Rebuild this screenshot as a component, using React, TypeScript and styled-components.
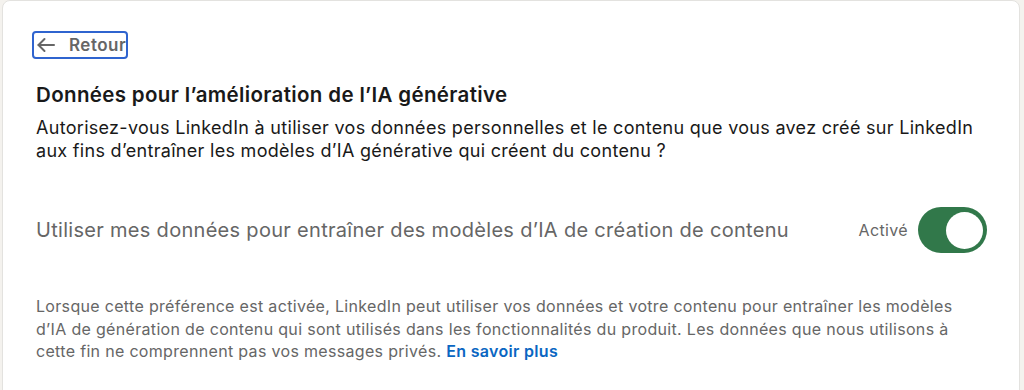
import styled, { createGlobalStyle } from 'styled-components';

const GlobalStyle = createGlobalStyle`
	body {
		margin: 0;
		background-color: #f4f2ee;
		font-family: Inter, "Liberation Sans", sans-serif;
	}
`;

const Page = styled.div`
	padding: 0 4px 0 2px;
	height: 390px;
	overflow: hidden;
`;

const Card = styled.section`
	background: #fff;
	border: 1px solid #e3e2df;
	border-radius: 8px;
	min-height: 420px;
	padding: 30px 32px 0 33px;
`;

const BackButton = styled.button`
	display: flex;
	align-items: center;
	gap: 13px;
	height: 28px;
	margin-left: -4px;
	padding: 0 0 0 2px;
	background: none;
	border: 2px solid #2f64cf;
	border-radius: 4px;
	color: #666;
	font-family: inherit;
	font-size: 17px;
	font-weight: 600;
	letter-spacing: 0.5px;
	cursor: pointer;
`;

const Title = styled.h2`
	margin: 24px 0 0;
	font-size: 20.5px;
	font-weight: 600;
	letter-spacing: 0.35px;
	color: #191919;
	line-height: 24px;
`;

const Description = styled.p`
	margin: 9px 0 0;
	font-size: 18px;
	letter-spacing: 0.3px;
	line-height: 23px;
	color: #191919;
`;

const SettingRow = styled.div`
	display: flex;
	align-items: center;
	justify-content: space-between;
	margin-top: 45px;
`;

const SettingLabel = styled.span`
	font-size: 20px;
	letter-spacing: 0.3px;
	color: #666;
`;

const Control = styled.div`
	display: flex;
	align-items: center;
	gap: 10px;
`;

const State = styled.span`
	font-size: 16px;
	letter-spacing: 0.35px;
	color: #666;
`;

const Toggle = styled.div<{ on: boolean }>`
	width: 69px;
	height: 46px;
	border-radius: 23px;
	background: ${p => (p.on ? '#31784a' : '#8c8c8c')};
	display: flex;
	align-items: center;
	justify-content: ${p => (p.on ? 'flex-end' : 'flex-start')};
	padding: 0 4px;
	box-sizing: border-box;
`;

const Knob = styled.span`
	width: 37px;
	height: 37px;
	border-radius: 50%;
	background: #fff;
`;

const Note = styled.p`
	max-width: 932px;
	margin: 42px 0 0;
	font-size: 16px;
	letter-spacing: 0.32px;
	line-height: 22.5px;
	color: #666;
`;

const Link = styled.a`
	color: #0a66c2;
	font-weight: 600;
	text-decoration: none;
`;

const Arrow = () => (
	<svg width="20" height="20" viewBox="0 0 20 20" fill="none" stroke="#666" strokeWidth="2" strokeLinecap="round" strokeLinejoin="round">
		<path d="M18 10H2.5" />
		<path d="M8.5 4l-6 6 6 6" />
	</svg>
);

export default function App() {
	return (
		<Page>
			<GlobalStyle />
			<Card>
				<BackButton>
					<Arrow />
					Retour
				</BackButton>
				<Title>Données pour l’amélioration de l’IA générative</Title>
				<Description>
					Autorisez-vous LinkedIn à utiliser vos données personnelles et le contenu que vous avez créé sur LinkedIn aux fins d’entraîner les modèles d’IA générative qui créent du contenu ?
				</Description>
				<SettingRow>
					<SettingLabel>Utiliser mes données pour entraîner des modèles d’IA de création de contenu</SettingLabel>
					<Control>
						<State>Activé</State>
						<Toggle on={true}>
							<Knob />
						</Toggle>
					</Control>
				</SettingRow>
				<Note>
					Lorsque cette préférence est activée, LinkedIn peut utiliser vos données et votre contenu pour entraîner les modèles d’IA de génération de contenu qui sont utilisés dans les fonctionnalités du produit. Les données que nous utilisons à cette fin ne comprennent pas vos messages privés.{' '}
					<Link href="#">En savoir plus</Link>
				</Note>
			</Card>
		</Page>
	);
}
